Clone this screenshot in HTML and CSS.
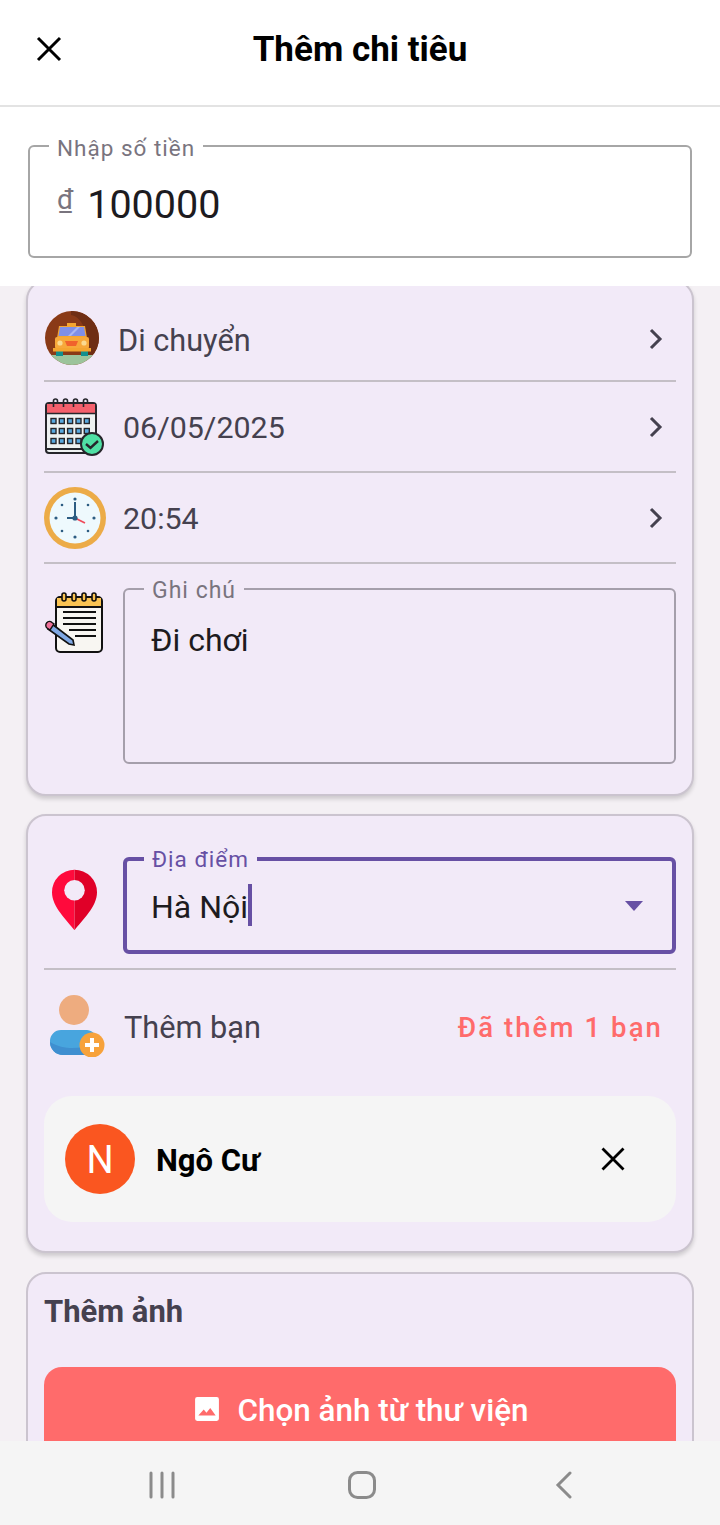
FILE: index.html
```html
<!DOCTYPE html>
<html lang="vi">
<head>
<meta charset="utf-8">
<title>Thêm chi tiêu</title>
<link rel="stylesheet" href="styles.css">
</head>
<body>
<div class="app">
  <header class="topbar">
    <svg class="close-icon" viewBox="0 0 26 26" width="26" height="26"><path d="M2 2 L24 24 M24 2 L2 24" stroke="#000" stroke-width="3" fill="none"/></svg>
    <h1 class="title">Thêm chi tiêu</h1>
  </header>
  <section class="amount">
    <div class="outlined amount-field">
      <span class="float-label amount-label">Nhập số tiền</span>
      <span class="currency">₫</span>
      <span class="amount-value">100000</span>
    </div>
  </section>
  <main class="scroll">
    <div class="card card-first">
      <div class="row row-cat">
        <svg class="icon-cat" viewBox="0 0 54 54" width="54" height="54">
          <defs><clipPath id="cc"><circle cx="27" cy="27" r="27"/></clipPath></defs>
          <g clip-path="url(#cc)">
            <rect width="54" height="54" fill="#8a3a17"/>
            <path d="M26 0 A27 27 0 0 1 54 27 V44 H38 V14 Q32 4 26 4Z" fill="#6f2e14"/>
            <rect y="44" width="54" height="10" fill="#9cc49b"/>
            <rect x="11" y="39" width="7" height="6" fill="#12908e"/>
            <rect x="36" y="39" width="7" height="6" fill="#12908e"/>
            <path d="M22 12 h9 v3 h-9z" fill="#f4a52f"/>
            <path d="M14 15 H40 L42 27 H12Z" fill="#f4a52f"/>
            <path d="M15 16 H39 L40.500 25 H13.500Z" fill="#7f8fe8"/>
            <path d="M23 25 L32 16 H35 L26 25Z" fill="#aab6f2"/>
            <rect x="10" y="26" width="34" height="12" rx="2" fill="#f7a83a"/>
            <circle cx="15" cy="32" r="2.600" fill="#fbd990"/>
            <circle cx="39" cy="32" r="2.600" fill="#fbd990"/>
            <path d="M20 30 H33 L31 35 H22Z" fill="#f0622c"/>
            <rect x="8" y="37" width="38" height="3.500" fill="#f4a52f"/>
          </g>
        </svg>
        <span class="row-text">Di chuyển</span>
        <svg class="chev" viewBox="0 0 16 24" width="16" height="24"><path d="M3 3 L12 12 L3 21" stroke="#45414f" stroke-width="3" fill="none"/></svg>
      </div>
      <div class="row row-date">
        <svg class="icon-date" viewBox="0 0 60 60" width="60" height="60">
          <rect x="2" y="6" width="50" height="50" rx="3" fill="#eef1f1" stroke="#26262b" stroke-width="2"/>
          <path d="M2 52 H52" stroke="#26262b" stroke-width="2"/>
          <path d="M3 7 H51 V16 H3Z" fill="#f4606c"/>
          <path d="M3 16.500 H51" stroke="#26262b" stroke-width="1.500"/>
          <g fill="none" stroke="#26262b" stroke-width="1.600"><path d="M9.500 10 V4 a2 2 0 0 1 4 0 V7"/><path d="M19.500 10 V4 a2 2 0 0 1 4 0 V7"/><path d="M29.500 10 V4 a2 2 0 0 1 4 0 V7"/><path d="M39.500 10 V4 a2 2 0 0 1 4 0 V7"/></g>
          <g fill="#5aa9df" stroke="#26262b" stroke-width="1.400">
            <rect x="7" y="21.500" width="5" height="5"/><rect x="15.300" y="21.500" width="5" height="5"/><rect x="23.600" y="21.500" width="5" height="5"/><rect x="32" y="21.500" width="5" height="5"/><rect x="40.300" y="21.500" width="5" height="5"/>
            <rect x="7" y="31.500" width="5" height="5"/><rect x="15.300" y="31.500" width="5" height="5"/><rect x="23.600" y="31.500" width="5" height="5"/><rect x="32" y="31.500" width="5" height="5"/><rect x="40.300" y="31.500" width="5" height="5"/>
            <rect x="7" y="41.500" width="5" height="5"/><rect x="15.300" y="41.500" width="5" height="5"/><rect x="23.600" y="41.500" width="5" height="5"/><rect x="32" y="41.500" width="5" height="5"/>
          </g>
          <circle cx="48" cy="47" r="11" fill="#4fe0a4" stroke="#26262b" stroke-width="2"/>
          <path d="M42 47 L46.500 51 L54 44" fill="none" stroke="#26262b" stroke-width="2.400"/>
        </svg>
        <span class="row-text row-num">06/05/2025</span>
        <svg class="chev" viewBox="0 0 16 24" width="16" height="24"><path d="M3 3 L12 12 L3 21" stroke="#45414f" stroke-width="3" fill="none"/></svg>
      </div>
      <div class="row row-time">
        <svg class="icon-time" viewBox="0 0 62 62" width="62" height="62">
          <circle cx="31" cy="31" r="31" fill="#ecab47"/>
          <path d="M31 0 A31 31 0 0 1 31 62 A31 31 0 0 0 31 0Z" fill="#e39a34"/>
          <circle cx="31" cy="31" r="25.500" fill="#eef9fd"/>
          <g fill="#2c5c82"><circle cx="31" cy="12" r="1.600"/><circle cx="31" cy="50" r="1.600"/><circle cx="12" cy="31" r="1.600"/><circle cx="50" cy="31" r="1.600"/><circle cx="44" cy="18" r="1.300"/><circle cx="18" cy="44" r="1.300"/><circle cx="44" cy="44" r="1.300"/><circle cx="18" cy="18" r="1.300"/></g>
          <path d="M31 31 L41 36" stroke="#ef4a5a" stroke-width="1.800"/>
          <path d="M31 15 V31 M23 31 H31" stroke="#2c5c82" stroke-width="2"/>
          <circle cx="31" cy="31" r="2.600" fill="#2c5c82"/>
        </svg>
        <span class="row-text row-num">20:54</span>
        <svg class="chev" viewBox="0 0 16 24" width="16" height="24"><path d="M3 3 L12 12 L3 21" stroke="#45414f" stroke-width="3" fill="none"/></svg>
      </div>
      <div class="notes-row">
        <svg class="icon-note" viewBox="0 0 60 64" width="60" height="64">
          <rect x="11" y="5" width="46" height="55" rx="4" fill="#f8f6f2" stroke="#111" stroke-width="2"/>
          <path d="M12 6 H56 V14 H12Z" fill="#fbc452"/>
          <path d="M11 15 H57" stroke="#111" stroke-width="2"/>
          <g fill="#fbc452" stroke="#111" stroke-width="1.600"><rect x="17" y="1" width="4" height="8" rx="2"/><rect x="27" y="1" width="4" height="8" rx="2"/><rect x="37" y="1" width="4" height="8" rx="2"/><rect x="47" y="1" width="4" height="8" rx="2"/></g>
          <path d="M18 20 H51 M18 26 H51 M18 32 H51 M24 38 H51 M30 44 H51" stroke="#111" stroke-width="2"/>
          <path d="M7 32 L28 48 L29 53 L24 52 L3 37Z" fill="#7fa8e4" stroke="#111" stroke-width="1.600"/>
          <path d="M2 36 a3.500 3.500 0 0 1 5 -5.500 l2 1.500 l-4 6Z" fill="#f0709a" stroke="#111" stroke-width="1.400"/>
        </svg>
        <div class="outlined notes-field">
          <span class="float-label notes-label">Ghi chú</span>
          <span class="field-text">Đi chơi</span>
        </div>
      </div>
    </div>

    <div class="card card-second">
      <div class="place-row">
        <svg class="icon-pin" viewBox="0 0 46 62" width="45" height="62">
          <path d="M23 0 A23 23 0 0 0 0 23 C0 38 15 51 23 62 Z" fill="#ff0a3c"/>
          <path d="M23 0 A23 23 0 0 1 46 23 C46 38 31 51 23 62 Z" fill="#e00028"/>
          <circle cx="23" cy="21" r="10.500" fill="#f2eaf8"/>
        </svg>
        <div class="place-field">
          <span class="float-label place-label">Địa điểm</span>
          <span class="field-text place-text">Hà Nội</span>
          <span class="caret"></span>
          <svg class="drop" viewBox="0 0 18 10" width="18" height="10"><path d="M0 0 H18 L9 10Z" fill="#6750a4"/></svg>
        </div>
      </div>
      <div class="friend-row">
        <svg class="icon-friend" viewBox="0 0 56 62" width="56" height="62">
          <circle cx="25" cy="15" r="15" fill="#eeac7f"/>
          <path d="M1 46 a11 11 0 0 1 11 -11 h26 a14 14 0 0 1 12 14 v4 a7 7 0 0 1 -7 7 H14 A13 13 0 0 1 1 47Z" fill="#48a5de"/>
          <path d="M1 47 C14 55 30 54 42 50 V60 H14 A13 13 0 0 1 1 47Z" fill="#3f8fd0"/>
          <circle cx="43" cy="50" r="12.500" fill="#f7a23b"/>
          <path d="M36 50 H50 M43 43 V57" stroke="#fff" stroke-width="4"/>
        </svg>
        <span class="row-text friend-text">Thêm bạn</span>
        <span class="friend-count">Đã thêm 1 bạn</span>
      </div>
      <div class="friend-chip">
        <span class="avatar">N</span>
        <span class="friend-name">Ngô Cư</span>
        <svg class="chip-close" viewBox="0 0 24 24" width="24" height="24"><path d="M1.500 1.500 L22.500 22.500 M22.500 1.500 L1.500 22.500" stroke="#000" stroke-width="2.800" fill="none"/></svg>
      </div>
    </div>

    <div class="card card-third">
      <h2 class="photo-title">Thêm ảnh</h2>
      <div class="photo-btn">
        <svg class="photo-icon" viewBox="0 0 24 24" width="26" height="26"><path d="M1 3 a2 2 0 0 1 2 -2 H21 a2 2 0 0 1 2 2 V21 a2 2 0 0 1 -2 2 H3 a2 2 0 0 1 -2 -2Z M4 18 H20 L15 11 L11.500 15.500 L9 12.500Z" fill="#fff" fill-rule="evenodd"/></svg>
        <span>Chọn ảnh từ thư viện</span>
      </div>
    </div>
  </main>
  <nav class="navbar">
    <svg viewBox="0 0 28 28" width="28" height="28"><path d="M3 2 V26 M14 2 V26 M25 2 V26" stroke="#8b8b8b" stroke-width="3" stroke-linecap="round" fill="none"/></svg>
    <svg class="nav-home" viewBox="0 0 28 28" width="28" height="28"><rect x="1.500" y="1.500" width="25" height="25" rx="8" stroke="#8b8b8b" stroke-width="3" fill="none"/></svg>
    <svg class="nav-back" viewBox="0 0 18 28" width="18" height="28"><path d="M15 2 L3 14 L15 26" stroke="#8b8b8b" stroke-width="3" stroke-linecap="round" fill="none"/></svg>
  </nav>
</div>
</body>
</html>
```
FILE: styles.css
```css
* { box-sizing: border-box; }
html, body { margin: 0; padding: 0; }
body { font-family: Roboto, "Liberation Sans", sans-serif; background: #fff; }
.app { width: 720px; height: 1525px; display: flex; flex-direction: column; overflow: hidden; }

.topbar { height: 107px; flex: none; display: flex; align-items: center; justify-content: center; position: relative; border-bottom: 2px solid #e3e3e3; padding-bottom: 5px; background: #fff; }
.close-icon { position: absolute; left: 36px; top: 36px; }
.title { margin: 0; font-size: 35px; font-weight: 700; color: #000; line-height: 40px; }

.amount { height: 179px; flex: none; padding: 38px 28px 0; background: #fff; position: relative; z-index: 2; }
.outlined { position: relative; border: 2px solid #a6a6a6; border-radius: 6px; }
.amount-field { height: 113px; display: flex; align-items: center; padding: 6px 27px 0; }
.float-label { position: absolute; padding: 0 8px; line-height: 24px; font-size: 22.500px; letter-spacing: 1px; color: #79747e; }
.amount-label { left: 19px; top: -11px; background: #fff; }
.currency { font-size: 28px; color: #79747e; margin-right: 14px; position: relative; top: -5px; }
.amount-value { font-size: 39.500px; color: #1d1b20; line-height: 48px; }

.scroll { flex: 1; min-height: 0; overflow: hidden; background: #f4f0f4; padding: 0 26px; }
.card { border: 2px solid #cbc4cf; border-radius: 20px; background: #f2eaf8; padding: 0 16px; box-shadow: 0 3px 4px rgba(0,0,0,.16); }
.card-first { height: 516px; margin-top: -6px; margin-bottom: 18px; }
.card-second { height: 439px; margin-bottom: 19px; padding-top: 41px; }
.card-third { height: 240px; padding-top: 19px; box-shadow: none; }

.row { display: flex; align-items: center; border-bottom: 2px solid #c4bfc6; position: relative; }
.row-cat { height: 100px; padding-top: 19px; }
.row-date { height: 91px; }
.row-time { height: 91px; }
.icon-cat { margin: -5px 0 0 1px; flex: none; }
.icon-date { flex: none; margin-right: 19px; }
.icon-time { flex: none; margin-right: 17px; }
.row-text { font-size: 30.700px; color: #45414f; line-height: 36px; }
.row-num { font-size: 30.400px; padding-top: 2px; }
.row-cat .row-text { margin-left: 19px; }
.chev { position: absolute; right: 12px; }
.row-cat .chev { top: 45px; }

.notes-row { display: flex; padding-top: 24px; }
.icon-note { flex: none; margin: 4px 18px 0 1px; }
.notes-field { width: 553px; height: 176px; border-color: #a59fab; padding: 32px 26px; }
.notes-label { left: 19px; top: -11px; background: #f2eaf8; font-size: 23px; }
.field-text { font-size: 32px; color: #1d1b20; line-height: 36px; }

.place-row { display: flex; height: 113px; border-bottom: 2px solid #c4bfc6; }
.icon-pin { flex: none; margin: 12px 26px 0 8px; }
.place-field { position: relative; width: 553px; height: 97px; border: 4px solid #6750a4; border-radius: 6px; padding: 28px 24px 0; display: flex; align-items: flex-start; }
.place-label { left: 17px; top: -14px; background: #f2eaf8; color: #6750a4; font-size: 22.500px; }
.place-text { line-height: 36px; }
.caret { width: 4px; height: 42px; background: #6750a4; margin-top: -5px; }
.drop { position: absolute; right: 29px; top: 40px; }

.friend-row { display: flex; align-items: center; height: 122px; padding-bottom: 8px; }
.icon-friend { flex: none; margin: -2px 19px 0 5px; }
.friend-text { flex: 1; padding-top: 2px; }
.friend-count { font-size: 27.500px; font-weight: 500; color: #ff6b6b; letter-spacing: 2.100px; margin-right: 13px; }

.friend-chip { height: 126px; border-radius: 28px; background: #f5f5f5; display: flex; align-items: center; padding: 0 21px; margin-top: 4px; }
.avatar { width: 70px; height: 70px; border-radius: 50%; background: #fa5620; color: #fff; font-size: 38px; padding-top: 1px; display: flex; align-items: center; justify-content: center; flex: none; }
.friend-name { flex: 1; font-size: 31px; font-weight: 700; color: #000; margin-left: 21px; padding-top: 3px; }
.chip-close { margin-right: 30px; }

.photo-title { margin: 0 0 36px; font-size: 31px; font-weight: 700; color: #45414f; line-height: 38px; }
.photo-btn { height: 120px; border-radius: 18px; background: #ff6b6b; color: #fff; display: flex; align-items: flex-start; justify-content: center; gap: 18px; padding: 23px 0 0 2px; font-size: 31.400px; font-weight: 500; line-height: 42px; }
.photo-icon { margin-top: 6px; }

.navbar { height: 84px; flex: none; background: #f5f5f5; display: flex; align-items: center; padding: 3px 0 0 148px; position: relative; z-index: 2; }
.nav-home { margin-left: 172px; }
.nav-back { margin-left: 179px; }
```
